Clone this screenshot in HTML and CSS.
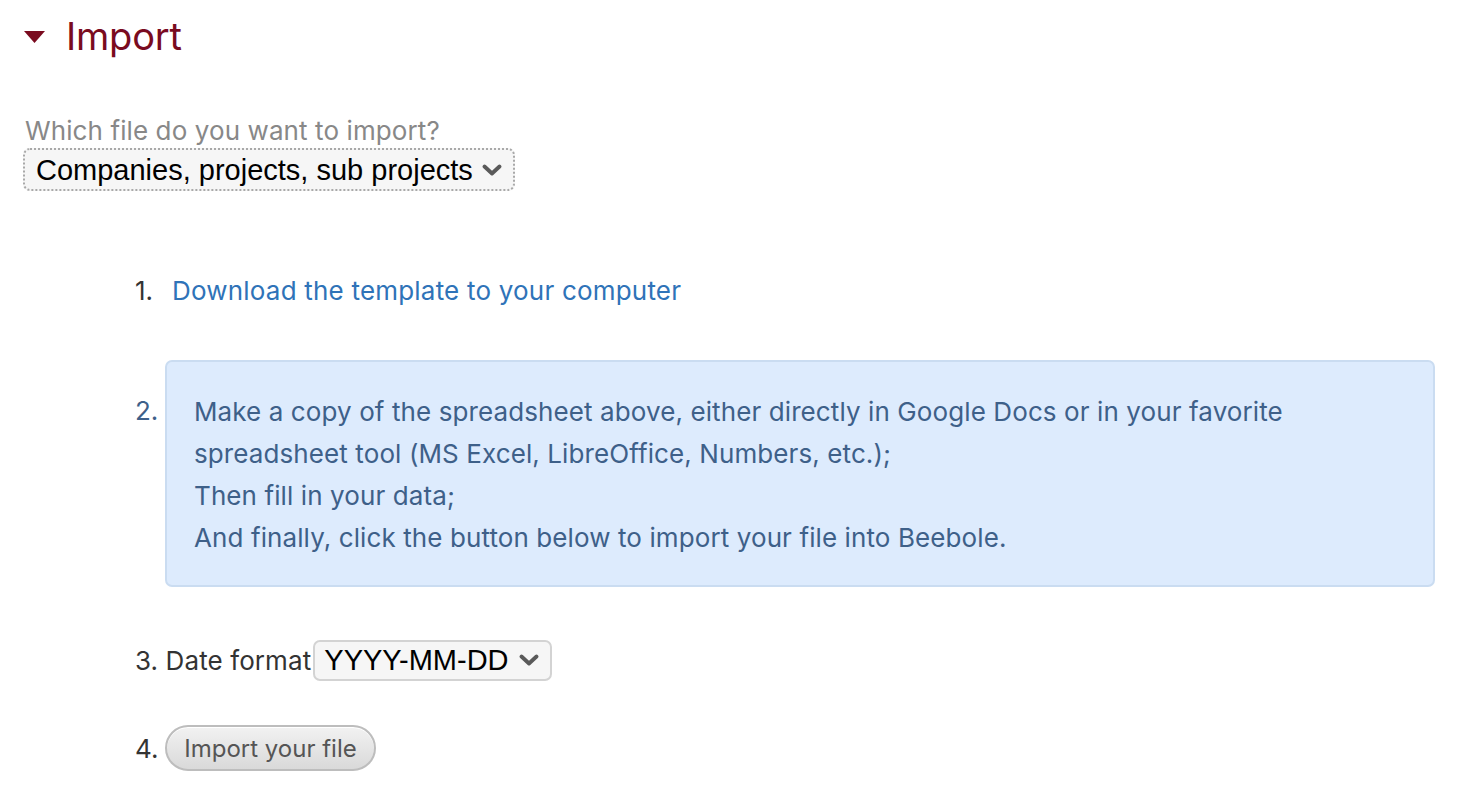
FILE: index.html
```html
<!DOCTYPE html>
<html>
<head>
<meta charset="utf-8">
<link rel="stylesheet" href="styles.css">
</head>
<body>
<div class="page">
  <h1 class="title">
    <svg class="caret" width="21" height="12" viewBox="0 0 21 12"><polygon points="0,0 21,0 10.5,12" fill="#7a0b1f"/></svg>
    <span>Import</span>
  </h1>

  <div class="which">
    <label class="which-label">Which file do you want to import?</label>
    <div class="select-wrap file-select">
      <select class="sel">
        <option>Companies, projects, sub projects</option>
      </select>
      <svg class="chev" width="20" height="14" viewBox="0 0 20 14"><polyline points="2.5,3.5 10,10.5 17.5,3.5" fill="none" stroke="#5a5a5a" stroke-width="3.8" stroke-linecap="round" stroke-linejoin="round"/></svg>
    </div>
  </div>

  <div class="steps">
    <div class="step step1">
      <span class="num">1.</span>
      <a class="link" href="#">Download the template to your computer</a>
    </div>
    <div class="step step2">
      <span class="num num2">2.</span>
      <div class="info">
        <p>Make a copy of the spreadsheet above, either directly in Google Docs or in your favorite spreadsheet tool (MS Excel, LibreOffice, Numbers, etc.);</p>
        <p>Then fill in your data;</p>
        <p>And finally, click the button below to import your file into Beebole.</p>
      </div>
    </div>
    <div class="step step3">
      <span class="lbl">3. Date format</span>
      <div class="select-wrap date-select">
        <select class="sel">
          <option>YYYY-MM-DD</option>
        </select>
        <svg class="chev" width="20" height="14" viewBox="0 0 20 14"><polyline points="2.5,3.5 10,10.5 17.5,3.5" fill="none" stroke="#5a5a5a" stroke-width="3.8" stroke-linecap="round" stroke-linejoin="round"/></svg>
      </div>
    </div>
    <div class="step step4">
      <span class="num">4.</span>
      <button class="btn">Import your file</button>
    </div>
  </div>
</div>
</body>
</html>
```
FILE: styles.css
```css
html, body {
  margin: 0;
  padding: 0;
  background: #fff;
}
body {
  font-family: Inter, "Noto Sans", sans-serif;
  color: #333;
}
.page {
  padding: 12px 0 0 24px;
  width: 1412px;
}
.title {
  display: flex;
  align-items: center;
  margin: 0;
  height: 48px;
  font-weight: 400;
  font-size: 38px;
  color: #7a0b1f;
  letter-spacing: -0.2px;
}
.caret {
  margin-right: 21px;
  margin-top: 2px;
}
.which {
  margin-top: 55px;
}
.which-label {
  display: block;
  font-size: 26px;
  line-height: 32px;
  color: #888;
  margin-left: 1px;
  letter-spacing: 0.1px;
}
.select-wrap {
  position: relative;
  display: inline-block;
}
.sel {
  appearance: none;
  -webkit-appearance: none;
  font-family: "Liberation Sans", Arial, sans-serif;
  font-size: 29px;
  color: #000;
  background: #f6f6f6;
  border: 1px solid #c9c9c9;
  border-radius: 7px;
  outline: none;
  margin: 0;
}
.file-select {
  margin-top: 1px;
  margin-left: -1px;
}
.file-select .sel {
  width: 492px;
  height: 43px;
  padding: 0 40px 0 11px;
  border: 2px dotted #a9a9a9;
}
.chev {
  position: absolute;
  top: 50%;
  margin-top: -7px;
  right: 13px;
  pointer-events: none;
}
.steps {
  margin-left: 111px;
  margin-top: 79px;
}
.step {
  display: flex;
  align-items: center;
  font-size: 26px;
}
.num {
  width: 30px;
  flex: none;
  color: #333;
}
.step1 {
  height: 40px;
}
.link {
  color: #2f73b8;
  text-decoration: none;
  margin-left: 7px;
  letter-spacing: 0.2px;
}
.step2 {
  align-items: flex-start;
  margin-top: 50px;
}
.num2 {
  color: #3e6089;
  margin-top: 30px;
  line-height: 42px;
}
.info {
  width: 1270px;
  box-sizing: border-box;
  background: #ddebfd;
  border: 2px solid #cadcf1;
  border-radius: 7px;
  padding: 29px 28px 26px 27px;
  color: #3e6089;
  line-height: 42px;
  letter-spacing: 0.1px;
}
.info p {
  margin: 0;
}
.step3 {
  margin-top: 53px;
  height: 40px;
}
.lbl {
  color: #333;
  letter-spacing: 0.1px;
}
.date-select {
  margin-left: 2px;
}
.date-select .sel {
  width: 239px;
  height: 41px;
  padding: 0 40px 0 9px;
  border: 2px solid #d3d3d3;
}
.step4 {
  margin-top: 45px;
}
.btn {
  font-family: Inter, "Noto Sans", sans-serif;
  font-size: 24px;
  color: #555;
  width: 211px;
  height: 46px;
  border: 2px solid #bdbdbd;
  border-radius: 23px;
  background: linear-gradient(#f2f2f2, #d9d9d9);
  box-shadow: inset 0 1px 0 #fff;
  padding: 0;
}
```
